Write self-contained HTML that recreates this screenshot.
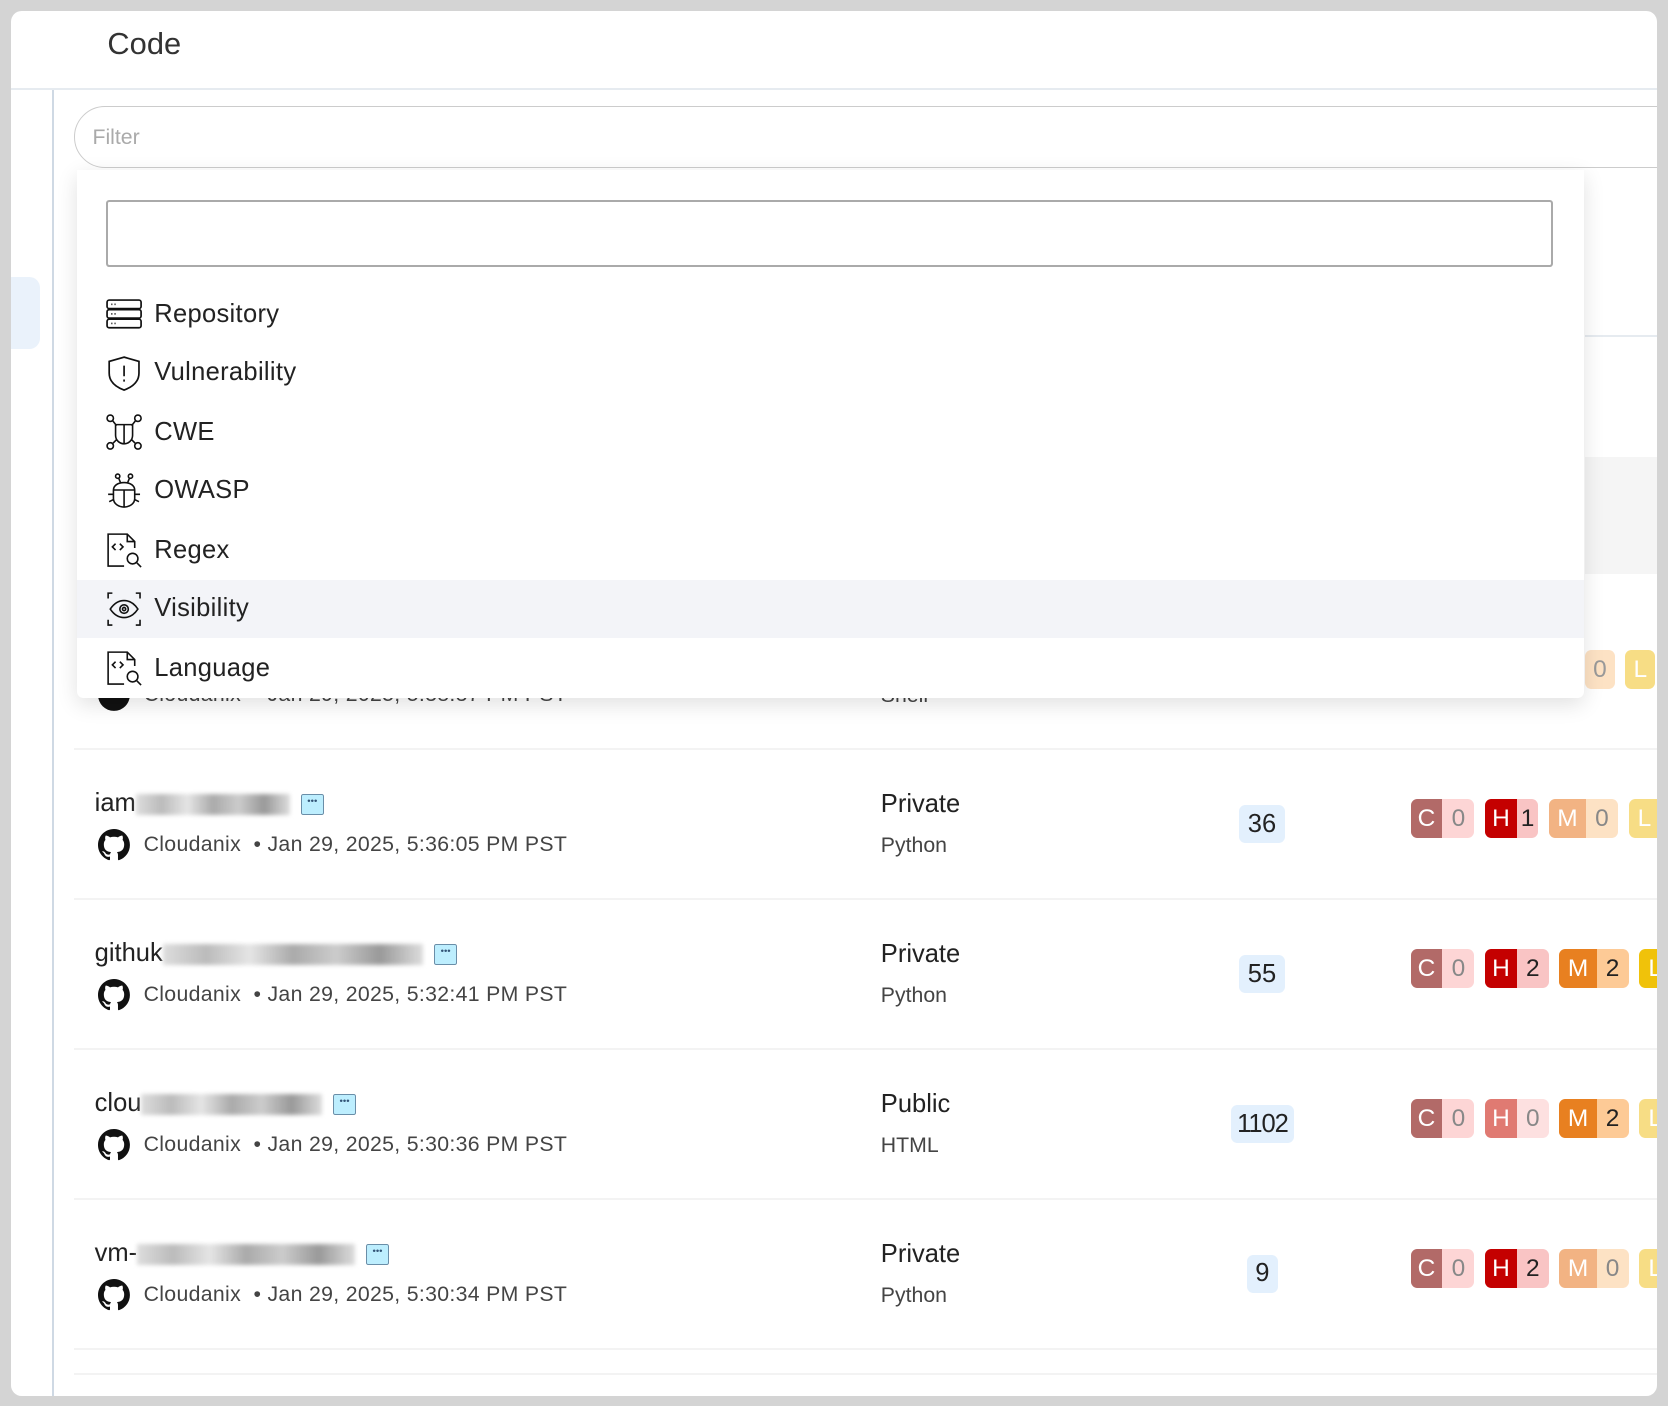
<!DOCTYPE html>
<html><head><meta charset="utf-8"><style>
html,body{margin:0;padding:0}
body{width:1568px;height:1322px;zoom:1.06378;background:#d4d4d4;font-family:"Liberation Sans",sans-serif;color:#222;position:relative;overflow:hidden}
.card{position:absolute;left:10px;top:10px;width:1548px;height:1302px;background:#fff;border-radius:10px;overflow:hidden}
.abs{position:absolute}
.hdr{left:91px;top:14px;font-size:29px;color:#333}
.hline{left:0;top:73px;width:1548px;height:2px;background:#e6ebf0}
.side{left:39px;top:75px;width:2px;height:1300px;background:#cfd9e4}
.tab{left:-10px;top:250px;width:38px;height:68px;background:#eaf2fb;border-radius:10px}
.filter{left:60px;top:90px;width:1560px;height:58px;border:1.5px solid #ccc;border-radius:30px;box-sizing:border-box}
.filter span{position:absolute;left:16px;top:17px;font-size:20px;color:#aaa}
.sep{left:60px;height:2px;width:1500px;background:#f3f3f3}
.name{font-size:24px;color:#222}
.blur{display:inline-block;height:20px;vertical-align:middle;background:linear-gradient(90deg,#ddd,#bbb,#e5e5e5,#aaa,#ccc,#999,#ddd);filter:blur(2px)}
.dots{display:inline-block;width:20px;height:18px;border:1.5px solid #6a8ea8;background:#bdeefe;border-radius:2px;vertical-align:middle;font-size:9px;line-height:14px;text-align:center;color:#357;margin-left:10px}
.meta{font-size:20px;color:#444;display:flex;align-items:center;letter-spacing:0.3px}
.vis{font-size:24px;color:#222}
.lang{font-size:20px;color:#444}
.cnt{background:#e3f0fd;border-radius:6px;font-size:24px;padding:4px 8px;color:#222}
.badges{display:flex;gap:10px}
.b{display:flex;height:37px;border-radius:6px;overflow:hidden;font-size:23px;line-height:37px}
.b i{font-style:normal;width:30px;text-align:center;color:#fff}
.b u{text-decoration:none;width:30px;text-align:center}
.dd{left:62px;top:150px;width:1417px;height:496px;background:#fff;box-shadow:0 6px 20px rgba(0,0,0,.12);border-radius:0 0 6px 6px}
.ddin{left:28px;top:28px;width:1360px;height:63px;border:2px solid #aaa;border-radius:3px;box-sizing:border-box}
.it{left:0;width:1417px;height:55px;display:flex;align-items:center;font-size:24px;color:#222;letter-spacing:0.3px}
.it svg{margin-left:28px;margin-right:11px}
</style></head><body>
<div class="card">
<div class="abs hdr">Code</div>
<div class="abs hline"></div>
<div class="abs side"></div>
<div class="abs tab"></div>
<div class="abs" style="left:1480px;top:305px;width:70px;height:2px;background:#e6ebf0"></div>
<div class="abs" style="left:1480px;top:420px;width:70px;height:110px;background:#f5f5f5"></div>
<div class="abs" style="left:1480px;top:601px;display:flex;gap:10px"><div class="b" style="background:#fde2c4;width:28px"><u style="color:#999">0</u></div><div class="b" style="background:#f7dd85;width:28px"><i>L</i></div></div>

<!-- hidden row behind dropdown -->
<div class="abs meta" style="left:82px;top:628px"><svg width="30" height="30" viewBox="0 0 16 16"><circle cx="8" cy="8" r="8" fill="#111"/></svg><span style="margin-left:13px">Cloudanix&nbsp; • Jan 29, 2025, 5:38:37 PM PST</span></div>
<div class="abs lang" style="left:818px;top:632px">Shell</div>

<div class="abs sep" style="top:693px"></div>
<div class="abs sep" style="top:834px"></div>
<div class="abs sep" style="top:975px"></div>
<div class="abs sep" style="top:1116px"></div>
<div class="abs sep" style="top:1257px"></div>
<div class="abs sep" style="top:1281px"></div>

<div class="abs name" style="left:79px;top:732px">iam<span class="blur" style="width:145px"></span><span class="dots">•••</span></div>
<div class="abs name" style="left:79px;top:873px">githuk<span class="blur" style="width:245px"></span><span class="dots">•••</span></div>
<div class="abs name" style="left:79px;top:1014px">clou<span class="blur" style="width:170px"></span><span class="dots">•••</span></div>
<div class="abs name" style="left:79px;top:1155px">vm-<span class="blur" style="width:205px"></span><span class="dots">•••</span></div>

<div class="abs meta" style="left:82px;top:769px"><svg width="30" height="30" viewBox="0 0 16 16"><path fill="#111" d="M8 0C3.58 0 0 3.58 0 8c0 3.54 2.29 6.53 5.47 7.59.4.07.55-.17.55-.38v-1.33c-2.23.48-2.7-1.07-2.7-1.07-.36-.93-.89-1.17-.89-1.17-.73-.5.06-.49.06-.49.8.06 1.230.82 1.23.82.72 1.23 1.88.87 2.34.67.07-.52.28-.87.51-1.07-1.78-.2-3.64-.89-3.64-3.95 0-.87.31-1.59.82-2.15-.08-.2-.36-1.02.08-2.12 0 0 .67-.21 2.2.82.64-.18 1.32-.27 2-.27.68 0 1.36.09 2 .27 1.53-1.04 2.2-.82 2.2-.82.44 1.1.16 1.92.08 2.12.51.56.82 1.27.82 2.15 0 3.07-1.87 3.75-3.65 3.95.29.25.54.73.54 1.48v2.2c0 .21.15.46.55.38A8.01 8.01 0 0016 8c0-4.42-3.58-8-8-8z"/></svg><span style="margin-left:13px">Cloudanix&nbsp; • Jan 29, 2025, 5:36:05 PM PST</span></div>
<div class="abs meta" style="left:82px;top:910px"><svg width="30" height="30" viewBox="0 0 16 16"><path fill="#111" d="M8 0C3.58 0 0 3.58 0 8c0 3.54 2.29 6.53 5.47 7.59.4.07.55-.17.55-.38v-1.33c-2.23.48-2.7-1.07-2.7-1.07-.36-.93-.89-1.17-.89-1.17-.73-.5.06-.49.06-.49.8.06 1.23.82 1.23.82.72 1.23 1.88.87 2.34.67.07-.52.28-.87.51-1.07-1.78-.2-3.64-.89-3.64-3.95 0-.87.31-1.59.82-2.15-.08-.2-.36-1.02.08-2.12 0 0 .67-.21 2.2.82.64-.18 1.32-.27 2-.27.68 0 1.36.09 2 .27 1.53-1.04 2.2-.82 2.2-.82.44 1.1.16 1.92.08 2.12.51.56.82 1.27.82 2.15 0 3.07-1.87 3.75-3.65 3.95.29.25.54.73.54 1.48v2.2c0 .21.15.46.55.38A8.01 8.01 0 0016 8c0-4.42-3.58-8-8-8z"/></svg><span style="margin-left:13px">Cloudanix&nbsp; • Jan 29, 2025, 5:32:41 PM PST</span></div>
<div class="abs meta" style="left:82px;top:1051px"><svg width="30" height="30" viewBox="0 0 16 16"><path fill="#111" d="M8 0C3.58 0 0 3.58 0 8c0 3.54 2.29 6.53 5.47 7.59.4.07.55-.17.55-.38v-1.33c-2.23.48-2.7-1.07-2.7-1.07-.36-.93-.89-1.17-.89-1.17-.73-.5.06-.49.06-.49.8.06 1.23.82 1.23.82.72 1.23 1.88.87 2.34.67.07-.52.28-.87.51-1.07-1.78-.2-3.64-.89-3.64-3.95 0-.87.31-1.59.82-2.15-.08-.2-.36-1.02.08-2.12 0 0 .67-.21 2.2.82.64-.18 1.32-.27 2-.27.68 0 1.36.09 2 .27 1.53-1.04 2.2-.82 2.2-.82.44 1.1.16 1.92.08 2.12.51.56.82 1.27.82 2.15 0 3.07-1.87 3.75-3.65 3.95.29.25.54.73.54 1.48v2.2c0 .21.15.46.55.38A8.01 8.01 0 0016 8c0-4.42-3.58-8-8-8z"/></svg><span style="margin-left:13px">Cloudanix&nbsp; • Jan 29, 2025, 5:30:36 PM PST</span></div>
<div class="abs meta" style="left:82px;top:1192px"><svg width="30" height="30" viewBox="0 0 16 16"><path fill="#111" d="M8 0C3.58 0 0 3.58 0 8c0 3.54 2.29 6.53 5.47 7.59.4.07.55-.17.55-.38v-1.33c-2.23.48-2.7-1.07-2.7-1.07-.36-.93-.89-1.17-.89-1.17-.73-.5.06-.49.06-.49.8.06 1.23.82 1.23.82.72 1.23 1.88.87 2.34.67.07-.52.28-.87.51-1.07-1.78-.2-3.64-.89-3.64-3.95 0-.87.31-1.59.82-2.15-.08-.2-.36-1.02.08-2.12 0 0 .67-.21 2.2.82.64-.18 1.32-.27 2-.27.68 0 1.36.09 2 .27 1.53-1.04 2.2-.82 2.2-.82.44 1.1.16 1.92.08 2.12.51.56.82 1.27.82 2.15 0 3.07-1.87 3.75-3.65 3.95.29.25.54.73.54 1.48v2.2c0 .21.15.46.55.38A8.01 8.01 0 0016 8c0-4.42-3.58-8-8-8z"/></svg><span style="margin-left:13px">Cloudanix&nbsp; • Jan 29, 2025, 5:30:34 PM PST</span></div>

<div class="abs vis" style="left:818px;top:733px">Private</div><div class="abs lang" style="left:818px;top:773px">Python</div>
<div class="abs vis" style="left:818px;top:874px">Private</div><div class="abs lang" style="left:818px;top:914px">Python</div>
<div class="abs vis" style="left:818px;top:1015px">Public</div><div class="abs lang" style="left:818px;top:1055px">HTML</div>
<div class="abs vis" style="left:818px;top:1156px">Private</div><div class="abs lang" style="left:818px;top:1196px">Python</div>

<div class="abs cnt" style="left:1155px;top:747px">36</div>
<div class="abs cnt" style="left:1155px;top:888px">55</div>
<div class="abs cnt" style="left:1147px;top:1029px;padding:4px 6px;letter-spacing:-1px">1102</div>
<div class="abs cnt" style="left:1162px;top:1170px">9</div>

<div class="abs badges" style="left:1316px;top:741px">
<div class="b" style="background:#fdd5d5"><i style="background:#b26a68">C</i><u style="color:#888">0</u></div>
<div class="b" style="background:#f9c4c4"><i style="background:#c40000">H</i><u style="width:20px;color:#222">1</u></div>
<div class="b" style="background:#fde2c4"><i style="background:#f2b383;width:35px">M</i><u style="color:#888">0</u></div>
<div class="b" style="background:#f7dd85;width:40px"><i>L</i></div></div>
<div class="abs badges" style="left:1316px;top:882px">
<div class="b" style="background:#fdd5d5"><i style="background:#b26a68">C</i><u style="color:#888">0</u></div>
<div class="b" style="background:#f9c4c4"><i style="background:#c40000">H</i><u style="color:#222">2</u></div>
<div class="b" style="background:#fdca96"><i style="background:#e88020;width:35px">M</i><u style="color:#222">2</u></div>
<div class="b" style="background:#f0c20a;width:40px"><i>L</i></div></div>
<div class="abs badges" style="left:1316px;top:1023px">
<div class="b" style="background:#fdd5d5"><i style="background:#b26a68">C</i><u style="color:#888">0</u></div>
<div class="b" style="background:#fde0e0"><i style="background:#e07a72">H</i><u style="color:#888">0</u></div>
<div class="b" style="background:#fdca96"><i style="background:#e88020;width:35px">M</i><u style="color:#222">2</u></div>
<div class="b" style="background:#f7dd85;width:40px"><i>L</i></div></div>
<div class="abs badges" style="left:1316px;top:1164px">
<div class="b" style="background:#fdd5d5"><i style="background:#b26a68">C</i><u style="color:#888">0</u></div>
<div class="b" style="background:#f9c4c4"><i style="background:#c40000">H</i><u style="color:#222">2</u></div>
<div class="b" style="background:#fde2c4"><i style="background:#f2b383;width:35px">M</i><u style="color:#888">0</u></div>
<div class="b" style="background:#f7dd85;width:40px"><i>L</i></div></div>

<div class="abs filter"><span>Filter</span></div>

<div class="abs dd">
<div class="abs ddin"></div>
<div class="abs it" style="top:108px"><svg width="34" height="28" viewBox="0 0 34 28" fill="none" stroke="#111" stroke-width="1.6"><rect x="1" y="1" width="32" height="8" rx="2"/><rect x="1" y="10" width="32" height="8" rx="2"/><rect x="1" y="19" width="32" height="8" rx="2"/><path d="M5 5h1M8 5h1M5 14h1M8 14h1M5 23h1M8 23h1"/></svg>Repository</div>
<div class="abs it" style="top:163px"><svg width="34" height="34" viewBox="0 0 34 34" fill="none" stroke="#111" stroke-width="1.6"><path d="M17 2l14 4v11c0 8-6 13-14 16C9 30 3 25 3 17V6z"/><path d="M17 10v10M17 23v2"/></svg>Vulnerability</div>
<div class="abs it" style="top:219px"><svg width="34" height="34" viewBox="0 0 34 34" fill="none" stroke="#111" stroke-width="1.5"><circle cx="4" cy="4" r="3"/><circle cx="30" cy="4" r="3"/><circle cx="4" cy="30" r="3"/><circle cx="30" cy="30" r="3"/><path d="M9 10h16v10c0 5-4 8-8 8s-8-3-8-8z M17 10v18 M6 6l4 5 M28 6l-4 5 M6 28l4-4 M28 28l-4-4"/></svg>CWE</div>
<div class="abs it" style="top:274px"><svg width="34" height="34" viewBox="0 0 34 34" fill="none" stroke="#111" stroke-width="1.5"><circle cx="11" cy="3" r="2"/><circle cx="23" cy="3" r="2"/><path d="M12 5l2 5M22 5l-2 5M7 16c0-4 4-7 10-7s10 3 10 7v8c0 5-5 8-10 8S7 29 7 24z M7 16h20M17 16v16M2 20h5M27 20h5M3 27l4-2M31 27l-4-2"/></svg>OWASP</div>
<div class="abs it" style="top:330px"><svg width="34" height="34" viewBox="0 0 34 34" fill="none" stroke="#111" stroke-width="1.5"><path d="M17 32H2V2h18l7 7v6M20 2v7h7"/><path d="M9 11l-3 3 3 3M13 11l3 3-3 3"/><circle cx="25" cy="25" r="5"/><path d="M29 29l4 4"/></svg>Regex</div>
<div class="abs it" style="top:385px;background:#f3f4f8"><svg width="34" height="34" viewBox="0 0 34 34" fill="none" stroke="#111" stroke-width="1.5"><path d="M2 7V2h4M28 2h4v5M2 27v5h4M28 32h4v-5"/><path d="M4 17c4-6 9-8 13-8s9 2 13 8c-4 6-9 8-13 8S8 23 4 17z"/><circle cx="17" cy="17" r="4"/><circle cx="17" cy="17" r="1.5"/></svg>Visibility</div>
<div class="abs it" style="top:441px"><svg width="34" height="34" viewBox="0 0 34 34" fill="none" stroke="#111" stroke-width="1.5"><path d="M17 32H2V2h18l7 7v6M20 2v7h7"/><path d="M9 11l-3 3 3 3M13 11l3 3-3 3"/><circle cx="25" cy="25" r="5"/><path d="M29 29l4 4"/></svg>Language</div>
</div>
</div>
</body></html>
